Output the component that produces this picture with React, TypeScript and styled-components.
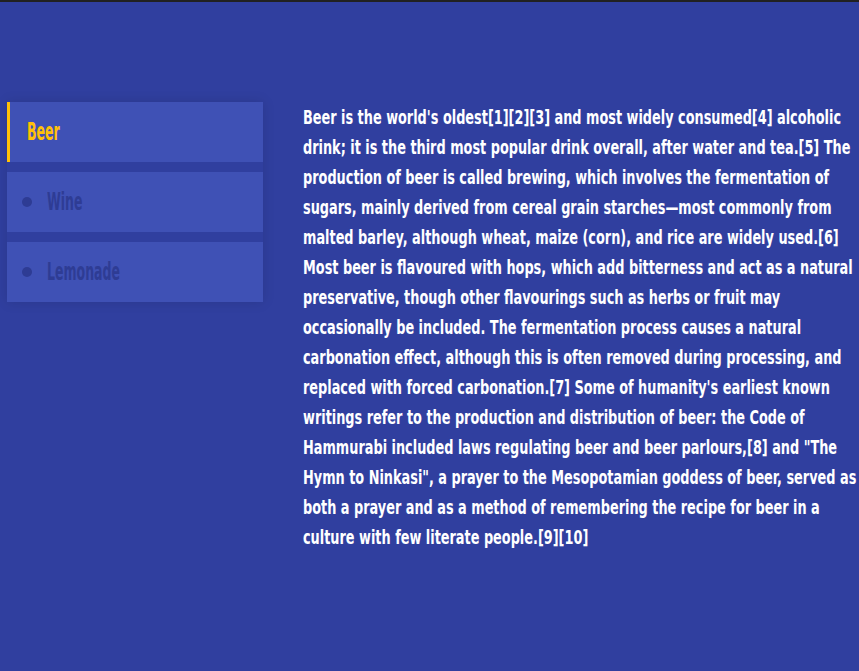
import { useState } from 'react';
import styled, { createGlobalStyle } from 'styled-components';

const GlobalStyle = createGlobalStyle`
    html, body {
        margin: 0;
        padding: 0;
        background: #303f9f;
    }
    body {
        border-top: 2px solid #212121;
        min-height: 669px;
        overflow: hidden;
        font-family: "DejaVu Sans Condensed", "Liberation Sans", sans-serif;
    }
`

const Page = styled.div`
    display: flex;
    align-items: flex-start;
    gap: 40px;
    padding: 100px 0 0 7px;
    overflow: hidden;
`

const TabList = styled.ul`
    list-style: none;
    margin: 0;
    padding: 0;
    width: 256px;
    flex-shrink: 0;
    display: flex;
    flex-direction: column;
    gap: 10px;
    box-shadow: 0 0 12px rgba(0, 0, 0, 0.12);
`

const Tab = styled.li<{ $active: boolean }>`
    height: 60px;
    display: flex;
    align-items: center;
    gap: 15px;
    box-sizing: border-box;
    background: #3f51b5;
    padding-left: ${p => p.$active ? '17px' : '15px'};
    border-left: ${p => p.$active ? '3px solid #ffc107' : 'none'};
    color: ${p => p.$active ? '#ffc107' : '#2e3c94'};
    font-size: 24px;
    font-weight: bold;
    cursor: pointer;
`

const Dot = styled.span`
    width: 10px;
    height: 10px;
    border-radius: 50%;
    background: #2e3c94;
    flex-shrink: 0;
`

// narrow the glyphs the way the condensed display face does
const Label = styled.span`
    display: inline-block;
    transform: scaleX(0.58);
    transform-origin: left center;
`

const Content = styled.p`
    flex: none;
    width: 777px;
    margin: 0;
    color: #fff;
    font-size: 20px;
    font-weight: bold;
    line-height: 30px;
    transform: scaleX(0.715);
    transform-origin: left top;
`

const drinks = ['Beer', 'Wine', 'Lemonade']

const text = `Beer is the world's oldest[1][2][3] and most widely consumed[4] alcoholic drink; it is the third most popular drink overall, after water and tea.[5] The production of beer is called brewing, which involves the fermentation of sugars, mainly derived from cereal grain starches\u2014most commonly from malted barley, although wheat, maize (corn), and rice are widely used.[6] Most beer is flavoured with hops, which add bitterness and act as a natural preservative, though other flavourings such as herbs or fruit may occasionally be included. The fermentation process causes a natural carbonation effect, although this is often removed during processing, and replaced with forced carbonation.[7] Some of humanity's earliest known writings refer to the production and distribution of beer: the Code of Hammurabi included laws regulating beer and beer parlours,[8] and "The Hymn to Ninkasi", a prayer to the Mesopotamian goddess of beer, served as both a prayer and as a method of remembering the recipe for beer in a culture with few literate people.[9][10]`

const App = () => {
    const [active, setActive] = useState(0)

    return (
        <>
            <GlobalStyle />
            <Page>
                <TabList>
                    {drinks.map((d, i) => (
                        <Tab key={d} $active={i === active} onClick={() => setActive(i)}>
                            {i !== active && <Dot />}
                            <Label>{d}</Label>
                        </Tab>
                    ))}
                </TabList>
                <Content>{text}</Content>
            </Page>
        </>
    )
}

export default App;
